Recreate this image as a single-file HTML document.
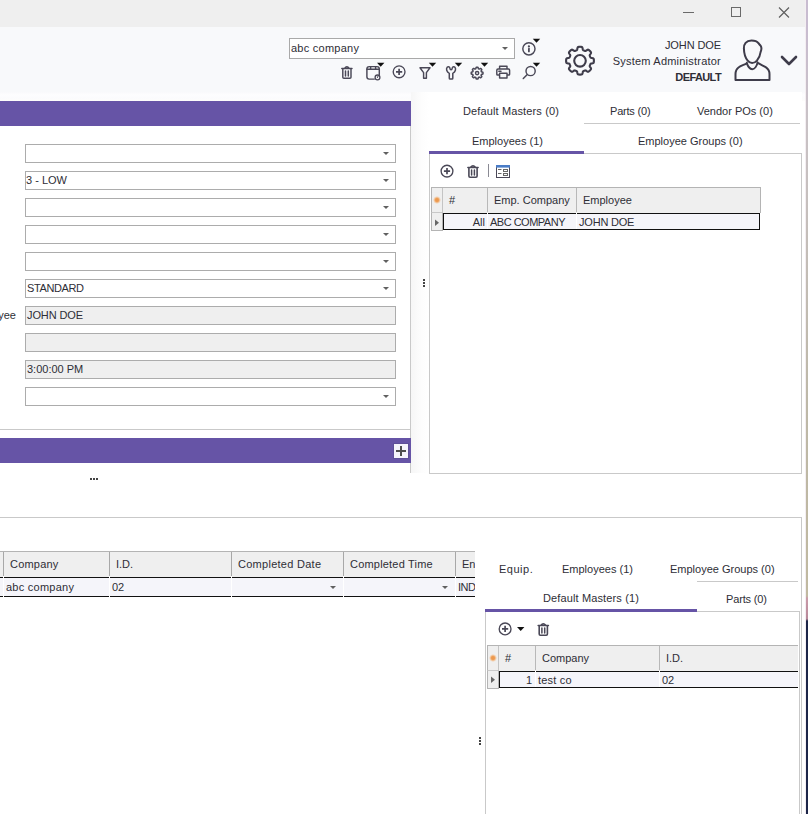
<!DOCTYPE html>
<html><head><meta charset="utf-8">
<style>
*{margin:0;padding:0;box-sizing:border-box}
html,body{width:808px;height:814px;overflow:hidden;background:#fff;font-family:"Liberation Sans",sans-serif;font-size:11px;color:#2e2e36}
.a{position:absolute}
.t{position:absolute;white-space:nowrap;line-height:13px}
.fld{position:absolute;left:25px;width:371px;height:19px;border:1px solid #acacac;background:#fff}
.fld.dis{background:#efefef}
.dd{position:absolute;width:0;height:0;border-left:3.5px solid transparent;border-right:3.5px solid transparent;border-top:3px solid #606060}
.tri{position:absolute;width:0;height:0;border-left:4px solid transparent;border-right:4px solid transparent;border-top:4px solid #111}
.hline{position:absolute;height:1px;background:#c9c9c9}
.vline{position:absolute;width:1px;background:#c9c9c9}
</style></head><body>
<!-- title bar -->
<div class="a" style="left:0;top:0;width:808px;height:27px;background:#efefef"></div>
<!-- header -->
<div class="a" style="left:0;top:27px;width:808px;height:65px;background:#f8f9fb"></div>
<div class="a" style="left:0;top:92px;width:808px;height:9px;background:linear-gradient(#f9f9fb,#fdfdfe 30%,#fbfbfd 70%,#fdfdfb)"></div>


<!-- title bar controls -->
<div class="a" style="left:683px;top:12px;width:11px;height:1px;background:#6a6a6a"></div>
<div class="a" style="left:731px;top:7px;width:10px;height:10px;border:1px solid #6a6a6a"></div>
<svg class="a" style="left:778px;top:7px" width="12" height="11" viewBox="0 0 12 11"><path d="M1 0.5L11 10.5M11 0.5L1 10.5" stroke="#5e5e5e" stroke-width="1.15"/></svg>

<!-- combo -->
<div class="a" style="left:289px;top:38px;width:226px;height:21px;border:1px solid #a9a9a9;background:#fff"></div>
<div class="t" style="left:291px;top:42px;letter-spacing:0.25px">abc company</div>
<div class="dd" style="left:502px;top:47px"></div>

<!-- header icons -->
<svg class="a" style="left:0;top:0;overflow:visible" width="808" height="100">
 <g fill="none" stroke="#4a4857" stroke-width="1.45" stroke-linejoin="round" stroke-linecap="round">
  <!-- trash -->
  <g transform="translate(-126.1 -98.9)"><path d="M467.9 167.5H478.1M470.6 167.3Q473 164.2 475.4 167.3"/><path d="M468.9 167.9V176.1Q468.9 177.2 470 177.2H476Q477.1 177.2 477.1 176.1V167.9"/><path d="M471.6 169.9V174.9M474.4 169.9V174.9" stroke-width="1.5"/></g>
  <!-- calendar -->
  <path d="M374.3 79.1H369.2Q366.9 79.1 366.9 76.8V68.9Q366.9 66.6 369.2 66.6H377Q379.3 66.6 379.3 68.9V74.6"/>
  <path d="M366.9 69.3H379.3M370.6 66.6V69.3M375.6 66.6V69.3"/>
  <circle cx="377.5" cy="77.4" r="2.4" stroke-width="1.3"/>
  <path d="M377.4 77.6L378.1 76" stroke-width="1"/>
  <!-- plus circle -->
  <circle cx="399.1" cy="71.8" r="5.9" stroke-width="1.35"/><path d="M396.0 71.8H402.2M399.1 68.7V74.9" stroke-width="1.7" stroke-linecap="butt"/>
  <!-- filter -->
  <path d="M420 67.8H430L426.4 72.6V78.2H423.6V72.6Z"/>
  <!-- wrench -->
  <path stroke-width="1.5" d="M449.6 67.4C449 66.6 447.8 66.6 447.2 67.3C446 68.8 446.4 71.8 449.3 73.3V78.2Q449.3 79 450.1 79H452Q452.8 79 452.8 78.2V73.3C455.7 71.8 456.1 68.8 454.9 67.3C454.3 66.6 453.1 66.6 452.5 67.4C452.3 68.6 451.8 69.8 451.05 69.8C450.3 69.8 449.8 68.6 449.6 67.4Z"/>
  <!-- printer -->
  <path d="M499.6 69V66.3H507V69M499.2 75H497.6Q496.8 75 496.8 74.2V70.2Q496.8 69 498 69H508.6Q509.6 69 509.6 70.2V74.2Q509.6 75 508.8 75H507.4M499.6 73.2H507V78H499.6Z"/>
  <path d="M498.8 71.2H501"/>
  <!-- search -->
  <circle cx="530.6" cy="71" r="4.6"/>
  <path d="M527.3 74.4L523.3 78.6"/>
  <!-- info -->
  <circle cx="528.9" cy="48.8" r="6.1"/>
  <path d="M528.9 48.6V51.4" stroke-width="1.8"/>
  <circle cx="528.9" cy="46.4" r="0.5" fill="#4a4857" stroke-width="1.2"/>
 </g>
 <!-- gear small -->
 <path fill="none" stroke="#4a4857" stroke-width="1.5" stroke-linejoin="round" d="M483.00 73.10L483.00 73.29L482.99 73.47L482.96 73.65L482.92 73.84L482.81 74.00L482.55 74.14L482.10 74.22L481.71 74.28L481.51 74.38L481.41 74.50L481.34 74.63L481.28 74.76L481.23 74.89L481.18 75.02L481.13 75.16L481.12 75.31L481.19 75.52L481.43 75.85L481.69 76.22L481.78 76.50L481.73 76.69L481.64 76.85L481.52 77.00L481.40 77.14L481.27 77.27L481.14 77.40L481.00 77.52L480.85 77.64L480.69 77.73L480.50 77.78L480.22 77.69L479.85 77.43L479.52 77.19L479.31 77.12L479.16 77.13L479.02 77.18L478.89 77.23L478.76 77.28L478.63 77.34L478.50 77.41L478.38 77.51L478.28 77.71L478.22 78.10L478.14 78.55L478.00 78.81L477.84 78.92L477.65 78.96L477.47 78.99L477.29 79.00L477.10 79.00L476.91 79.00L476.73 78.99L476.55 78.96L476.36 78.92L476.20 78.81L476.06 78.55L475.98 78.10L475.92 77.71L475.82 77.51L475.70 77.41L475.57 77.34L475.44 77.28L475.31 77.23L475.18 77.18L475.04 77.13L474.89 77.12L474.68 77.19L474.35 77.43L473.98 77.69L473.70 77.78L473.51 77.73L473.35 77.64L473.20 77.52L473.06 77.40L472.93 77.27L472.80 77.14L472.68 77.00L472.56 76.85L472.47 76.69L472.42 76.50L472.51 76.22L472.77 75.85L473.01 75.52L473.08 75.31L473.07 75.16L473.02 75.02L472.97 74.89L472.92 74.76L472.86 74.63L472.79 74.50L472.69 74.38L472.49 74.28L472.10 74.22L471.65 74.14L471.39 74.00L471.28 73.84L471.24 73.65L471.21 73.47L471.20 73.29L471.20 73.10L471.20 72.91L471.21 72.73L471.24 72.55L471.28 72.36L471.39 72.20L471.65 72.06L472.10 71.98L472.49 71.92L472.69 71.82L472.79 71.70L472.86 71.57L472.92 71.44L472.97 71.31L473.02 71.18L473.07 71.04L473.08 70.89L473.01 70.68L472.77 70.35L472.51 69.98L472.42 69.70L472.47 69.51L472.56 69.35L472.68 69.20L472.80 69.06L472.93 68.93L473.06 68.80L473.20 68.68L473.35 68.56L473.51 68.47L473.70 68.42L473.98 68.51L474.35 68.77L474.68 69.01L474.89 69.08L475.04 69.07L475.18 69.02L475.31 68.97L475.44 68.92L475.57 68.86L475.70 68.79L475.82 68.69L475.92 68.49L475.98 68.10L476.06 67.65L476.20 67.39L476.36 67.28L476.55 67.24L476.73 67.21L476.91 67.20L477.10 67.20L477.29 67.20L477.47 67.21L477.65 67.24L477.84 67.28L478.00 67.39L478.14 67.65L478.22 68.10L478.28 68.49L478.38 68.69L478.50 68.79L478.63 68.86L478.76 68.92L478.89 68.97L479.02 69.02L479.16 69.07L479.31 69.08L479.52 69.01L479.85 68.77L480.22 68.51L480.50 68.42L480.69 68.47L480.85 68.56L481.00 68.68L481.14 68.80L481.27 68.93L481.40 69.06L481.52 69.20L481.64 69.35L481.73 69.51L481.78 69.70L481.69 69.98L481.43 70.35L481.19 70.68L481.12 70.89L481.13 71.04L481.18 71.18L481.23 71.31L481.28 71.44L481.34 71.57L481.41 71.70L481.51 71.82L481.71 71.92L482.10 71.98L482.55 72.06L482.81 72.20L482.92 72.36L482.96 72.55L482.99 72.73L483.00 72.91Z"/>
 <circle cx="477.1" cy="73.1" r="1.6" fill="none" stroke="#4a4857" stroke-width="1.4"/>
 <!-- triangles -->
 <g fill="#111">
  <path d="M377 62.8H384.4L380.7 66.8Z"/>
  <path d="M428.8 62.8H436.2L432.5 66.8Z"/>
  <path d="M454.8 62.8H462.2L458.5 66.8Z"/>
  <path d="M480.8 62.8H488.2L484.5 66.8Z"/>
  <path d="M532.8 62.8H540.2L536.5 66.8Z"/>
  <path d="M532.8 38.8H540.2L536.5 42.8Z"/>
 </g>
</svg>

<!-- big gear -->
<svg class="a" style="left:0;top:0;overflow:visible" width="808" height="100">
 <path fill="none" stroke="#3e3c4a" stroke-width="2.1" stroke-linejoin="round" d="M593.90 60.70L593.90 60.97L593.89 61.25L593.87 61.52L593.84 61.79L593.81 62.06L593.75 62.33L593.65 62.59L593.48 62.84L593.18 63.05L592.70 63.23L592.07 63.35L591.46 63.45L591.01 63.57L590.73 63.73L590.55 63.90L590.42 64.09L590.32 64.28L590.24 64.48L590.15 64.67L590.07 64.87L589.99 65.07L589.91 65.27L589.83 65.47L589.77 65.68L589.72 65.90L589.73 66.15L589.82 66.46L590.05 66.86L590.41 67.36L590.77 67.90L590.99 68.36L591.04 68.72L590.99 69.02L590.87 69.27L590.72 69.50L590.56 69.72L590.39 69.93L590.21 70.13L590.02 70.33L589.83 70.53L589.63 70.72L589.43 70.91L589.23 71.09L589.02 71.26L588.80 71.42L588.57 71.57L588.32 71.69L588.02 71.74L587.66 71.69L587.20 71.47L586.66 71.11L586.16 70.75L585.76 70.52L585.45 70.43L585.20 70.42L584.98 70.47L584.77 70.53L584.57 70.61L584.37 70.69L584.17 70.77L583.97 70.85L583.78 70.94L583.58 71.02L583.39 71.12L583.20 71.25L583.03 71.43L582.87 71.71L582.75 72.16L582.65 72.77L582.53 73.40L582.35 73.88L582.14 74.18L581.89 74.35L581.63 74.45L581.36 74.51L581.09 74.54L580.82 74.57L580.55 74.59L580.27 74.60L580.00 74.60L579.73 74.60L579.45 74.59L579.18 74.57L578.91 74.54L578.64 74.51L578.37 74.45L578.11 74.35L577.86 74.18L577.65 73.88L577.47 73.40L577.35 72.77L577.25 72.16L577.13 71.71L576.97 71.43L576.80 71.25L576.61 71.12L576.42 71.02L576.22 70.94L576.03 70.85L575.83 70.77L575.63 70.69L575.43 70.61L575.23 70.53L575.02 70.47L574.80 70.42L574.55 70.43L574.24 70.52L573.84 70.75L573.34 71.11L572.80 71.47L572.34 71.69L571.98 71.74L571.68 71.69L571.43 71.57L571.20 71.42L570.98 71.26L570.77 71.09L570.57 70.91L570.37 70.72L570.17 70.53L569.98 70.33L569.79 70.13L569.61 69.93L569.44 69.72L569.28 69.50L569.13 69.27L569.01 69.02L568.96 68.72L569.01 68.36L569.23 67.90L569.59 67.36L569.95 66.86L570.18 66.46L570.27 66.15L570.28 65.90L570.23 65.68L570.17 65.47L570.09 65.27L570.01 65.07L569.93 64.87L569.85 64.67L569.76 64.48L569.68 64.28L569.58 64.09L569.45 63.90L569.27 63.73L568.99 63.57L568.54 63.45L567.93 63.35L567.30 63.23L566.82 63.05L566.52 62.84L566.35 62.59L566.25 62.33L566.19 62.06L566.16 61.79L566.13 61.52L566.11 61.25L566.10 60.97L566.10 60.70L566.10 60.43L566.11 60.15L566.13 59.88L566.16 59.61L566.19 59.34L566.25 59.07L566.35 58.81L566.52 58.56L566.82 58.35L567.30 58.17L567.93 58.05L568.54 57.95L568.99 57.83L569.27 57.67L569.45 57.50L569.58 57.31L569.68 57.12L569.76 56.92L569.85 56.73L569.93 56.53L570.01 56.33L570.09 56.13L570.17 55.93L570.23 55.72L570.28 55.50L570.27 55.25L570.18 54.94L569.95 54.54L569.59 54.04L569.23 53.50L569.01 53.04L568.96 52.68L569.01 52.38L569.13 52.13L569.28 51.90L569.44 51.68L569.61 51.47L569.79 51.27L569.98 51.07L570.17 50.87L570.37 50.68L570.57 50.49L570.77 50.31L570.98 50.14L571.20 49.98L571.43 49.83L571.68 49.71L571.98 49.66L572.34 49.71L572.80 49.93L573.34 50.29L573.84 50.65L574.24 50.88L574.55 50.97L574.80 50.98L575.02 50.93L575.23 50.87L575.43 50.79L575.63 50.71L575.83 50.63L576.03 50.55L576.22 50.46L576.42 50.38L576.61 50.28L576.80 50.15L576.97 49.97L577.13 49.69L577.25 49.24L577.35 48.63L577.47 48.00L577.65 47.52L577.86 47.22L578.11 47.05L578.37 46.95L578.64 46.89L578.91 46.86L579.18 46.83L579.45 46.81L579.73 46.80L580.00 46.80L580.27 46.80L580.55 46.81L580.82 46.83L581.09 46.86L581.36 46.89L581.63 46.95L581.89 47.05L582.14 47.22L582.35 47.52L582.53 48.00L582.65 48.63L582.75 49.24L582.87 49.69L583.03 49.97L583.20 50.15L583.39 50.28L583.58 50.38L583.78 50.46L583.97 50.55L584.17 50.63L584.37 50.71L584.57 50.79L584.77 50.87L584.98 50.93L585.20 50.98L585.45 50.97L585.76 50.88L586.16 50.65L586.66 50.29L587.20 49.93L587.66 49.71L588.02 49.66L588.32 49.71L588.57 49.83L588.80 49.98L589.02 50.14L589.23 50.31L589.43 50.49L589.63 50.68L589.83 50.87L590.02 51.07L590.21 51.27L590.39 51.47L590.56 51.68L590.72 51.90L590.87 52.13L590.99 52.38L591.04 52.68L590.99 53.04L590.77 53.50L590.41 54.04L590.05 54.54L589.82 54.94L589.73 55.25L589.72 55.50L589.77 55.72L589.83 55.93L589.91 56.13L589.99 56.33L590.07 56.53L590.15 56.73L590.24 56.92L590.32 57.12L590.42 57.31L590.55 57.50L590.73 57.67L591.01 57.83L591.46 57.95L592.07 58.05L592.70 58.17L593.18 58.35L593.48 58.56L593.65 58.81L593.75 59.07L593.81 59.34L593.84 59.61L593.87 59.88L593.89 60.15L593.90 60.43Z"/>
 <circle cx="580" cy="60.8" r="5.8" fill="none" stroke="#3e3c4a" stroke-width="2.1"/>
 <!-- avatar -->
 <path fill="none" stroke="#3e3c4a" stroke-width="2" stroke-linejoin="round" stroke-linecap="round"
   d="M751.5 40.6C746 40.6 743.8 44 743.9 48.5C744 53 745 57.5 747.7 60.6C749 62.2 750.5 63.1 752.1 63.1C754 63.1 755.6 62 756.9 60.6C759 58 760.3 55 760.6 52C761.5 50 761.6 47.5 760.8 46C760 44.8 759 44 758.4 43.2C757 41.3 754.5 40.6 751.5 40.6Z
   M746.8 62.8C747.5 66 750 69.3 752.2 69.3C754.5 69.3 756.8 66 757.6 62.5
   M746.8 63.3C744 64.8 741 65.5 738.8 67.2C736.3 69 735.5 71 735.5 74V79.9H769.5V74C769.5 71 768.5 69 766 67.3C764 66 761 65 758.2 63.2"/>
 <!-- chevron -->
 <path d="M782 57L789 64L796 57" fill="none" stroke="#3e3c4a" stroke-width="2.6" stroke-linecap="round" stroke-linejoin="round"/>
</svg>
<div class="t" style="right:87px;top:39px;text-align:right;letter-spacing:-0.1px">JOHN DOE</div>
<div class="t" style="right:87px;top:55px;text-align:right;letter-spacing:0.22px">System Administrator</div>
<div class="t" style="right:87px;top:71px;text-align:right;font-weight:bold;letter-spacing:-0.6px">DEFAULT</div>

<!-- left panel -->
<div class="a" style="left:0;top:101px;width:411px;height:25px;background:#6654a6"></div>

<!-- splitter -->
<div class="a" style="left:411px;top:92px;width:18px;height:381px;background:linear-gradient(90deg,#f6f6f6,#fdfdfd 60%,#fff)"></div>
<div class="vline" style="left:410px;top:126px;height:347px"></div>
<div class="hline" style="left:0;top:429px;width:410px"></div>

<div class="a" style="left:0;top:438px;width:411px;height:25px;background:#6654a6"></div>


<!-- form fields -->
<div class="fld" style="top:144px"></div>
<div class="dd" style="left:383px;top:152px"></div>
<div class="fld" style="top:171px"></div>
<div class="dd" style="left:383px;top:179px"></div>
<div class="t" style="left:26px;top:174px">3 - LOW</div>
<div class="fld" style="top:198px"></div>
<div class="dd" style="left:383px;top:206px"></div>
<div class="fld" style="top:225px"></div>
<div class="dd" style="left:383px;top:233px"></div>
<div class="fld" style="top:252px"></div>
<div class="dd" style="left:383px;top:260px"></div>
<div class="fld" style="top:279px"></div>
<div class="dd" style="left:383px;top:287px"></div>
<div class="t" style="left:27px;top:282px;letter-spacing:-0.4px">STANDARD</div>
<div class="fld dis" style="top:306px"></div>
<div class="t" style="left:27px;top:309px;letter-spacing:-0.1px">JOHN DOE</div>
<div class="fld dis" style="top:333px"></div>
<div class="fld dis" style="top:360px"></div>
<div class="t" style="left:27px;top:363px">3:00:00 PM</div>
<div class="fld" style="top:387px"></div>
<div class="dd" style="left:383px;top:395px"></div>
<div class="t" style="right:792px;top:309px">yee</div>
<div class="a" style="left:394px;top:444px;width:14px;height:14px;background:#f5f4fb;box-shadow:0 0 0 1px #5e4f98"></div>
<div class="a" style="left:396px;top:450px;width:10px;height:2px;background:#4e4e4e"></div>
<div class="a" style="left:400px;top:446px;width:2px;height:10px;background:#4e4e4e"></div>
<div class="a" style="left:90px;top:478px;width:2px;height:2px;background:#444"></div>
<div class="a" style="left:93px;top:478px;width:2px;height:2px;background:#444"></div>
<div class="a" style="left:96px;top:478px;width:2px;height:2px;background:#444"></div>
<div class="a" style="left:423px;top:279px;width:2px;height:2px;background:#444"></div>
<div class="a" style="left:423px;top:282px;width:2px;height:2px;background:#444"></div>
<div class="a" style="left:423px;top:285px;width:2px;height:2px;background:#444"></div>

<!-- right panel -->
<div class="a" style="left:429px;top:92px;width:373px;height:61px;background:#fff"></div>
<div class="a" style="left:429px;top:153px;width:373px;height:321px;border:1px solid #c9c9c9;background:#fff"></div>


<!-- right panel tabs -->
<div class="t" style="left:463px;top:105px;letter-spacing:0.13px">Default Masters (0)</div>
<div class="t" style="left:610px;top:105px;letter-spacing:-0.2px">Parts (0)</div>
<div class="t" style="left:697px;top:105px">Vendor POs (0)</div>
<div class="hline" style="left:584px;top:123px;width:216px"></div>
<div class="t" style="left:472px;top:135px">Employees (1)</div>
<div class="t" style="left:638px;top:135px">Employee Groups (0)</div>
<div class="a" style="left:429px;top:151px;width:155px;height:3px;background:#6654a6"></div>

<!-- toolbar -->
<svg class="a" style="left:0;top:0;overflow:visible" width="808" height="250">
 <g fill="none" stroke="#4a4857" stroke-width="1.6" stroke-linejoin="round" stroke-linecap="round">
  <circle cx="447" cy="171.1" r="5.9" stroke-width="1.35"/><path d="M443.9 171.1H450.1M447 168.0V174.2" stroke-width="1.7" stroke-linecap="butt"/>
  <g transform="translate(0 0)"><path d="M467.9 167.5H478.1M470.6 167.3Q473 164.2 475.4 167.3"/><path d="M468.9 167.9V176.1Q468.9 177.2 470 177.2H476Q477.1 177.2 477.1 176.1V167.9"/><path d="M471.6 169.9V174.9M474.4 169.9V174.9" stroke-width="1.5"/></g>
 </g>
 <path d="M488.5 164V177" stroke="#8a8a94" stroke-width="1"/>
  <rect x="496.5" y="165.5" width="13" height="12" fill="#fff" stroke="#4a4857" stroke-width="1"/>
 <rect x="496" y="165" width="14" height="2.6" fill="#4a7cc7"/>
 <rect x="498" y="169" width="3.5" height="1" fill="#666"/>
 <rect x="498" y="173" width="3.5" height="1" fill="#666"/>
 <rect x="503.5" y="169.5" width="4" height="2" fill="none" stroke="#666" stroke-width="1"/>
 <rect x="503.5" y="173.5" width="4" height="2" fill="none" stroke="#666" stroke-width="1"/>
</svg>

<!-- grid -->
<div class="a" style="left:431px;top:187px;width:330px;height:26px;background:#efefef;border:1px solid #b4b4b4;border-bottom:none"></div>
<div class="a" style="left:431px;top:212px;width:12px;height:19px;background:#efefef;border:1px solid #b4b4b4;border-top:1px solid #c8c8c8"></div>
<div class="vline" style="left:442px;top:188px;height:24px;background:#c4c4c4"></div>
<div class="vline" style="left:487px;top:188px;height:24px;background:#b8b8b8"></div>
<div class="vline" style="left:576px;top:188px;height:24px;background:#b8b8b8"></div>
<div class="a" style="left:443px;top:213px;width:317px;height:17px;border:1px solid #111;background:#f5f5fa"></div>
<div class="vline" style="left:487px;top:213px;height:16px;background:#fff"></div>
<div class="vline" style="left:576px;top:213px;height:16px;background:#fff"></div>
<div class="a" style="left:433px;top:196px;width:8px;height:8px;border-radius:50%;background:radial-gradient(circle,#ea9448 0,#ee9f58 1.8px,rgba(245,175,110,0.55) 2.8px,rgba(250,210,170,0) 4px)"></div>
<svg class="a" style="left:434px;top:219px" width="6" height="8"><path d="M1 0.5L5 3.8L1 7Z" fill="#666"/></svg>
<div class="t" style="left:449px;top:194px">#</div>
<div class="t" style="left:494px;top:194px">Emp. Company</div>
<div class="t" style="left:583px;top:194px">Employee</div>
<div class="t" style="right:323px;top:216px">All</div>
<div class="t" style="left:490px;top:216px;letter-spacing:-0.5px">ABC COMPANY</div>
<div class="t" style="left:579px;top:216px;letter-spacing:-0.2px">JOHN DOE</div>

<!-- bottom -->
<div class="hline" style="left:0;top:517px;width:802px"></div>
<div class="vline" style="left:801px;top:517px;height:297px"></div>

<!-- bottom left grid -->
<div class="a" style="left:0;top:551px;width:475px;height:26px;background:#efefef;border-top:1px solid #b4b4b4"></div>
<div class="a" style="left:0;top:577px;width:475px;height:19px;background:#f5f5fa"></div>
<div class="a" style="left:0;top:577px;width:475px;height:1px;background:#111"></div>
<div class="a" style="left:0;top:596px;width:475px;height:1px;background:#111"></div>
<div class="vline" style="left:3px;top:552px;height:24px;background:#a8a8a8"></div>
<div class="vline" style="left:109px;top:552px;height:24px;background:#a8a8a8"></div>
<div class="vline" style="left:231px;top:552px;height:24px;background:#a8a8a8"></div>
<div class="vline" style="left:343px;top:552px;height:24px;background:#a8a8a8"></div>
<div class="vline" style="left:455px;top:552px;height:24px;background:#a8a8a8"></div>
<div class="vline" style="left:3px;top:576px;height:21px;background:#fff"></div>
<div class="vline" style="left:109px;top:576px;height:21px;background:#fff"></div>
<div class="vline" style="left:231px;top:576px;height:21px;background:#fff"></div>
<div class="vline" style="left:343px;top:576px;height:21px;background:#fff"></div>
<div class="vline" style="left:455px;top:576px;height:21px;background:#fff"></div>
<div class="t" style="left:10px;top:558px;letter-spacing:0.2px">Company</div>
<div class="t" style="left:116px;top:558px">I.D.</div>
<div class="t" style="left:238px;top:558px;letter-spacing:0.27px">Completed Date</div>
<div class="t" style="left:350px;top:558px;letter-spacing:0.2px">Completed Time</div>
<div class="a" style="left:462px;top:551px;width:13px;height:26px;overflow:hidden"><div class="t" style="left:0;top:7px">Enabled</div></div>
<div class="t" style="left:6px;top:581px;letter-spacing:0.25px">abc company</div>
<div class="t" style="left:112px;top:581px">02</div>
<div class="a" style="left:456px;top:578px;width:19px;height:17px;overflow:hidden"><div class="t" style="left:2px;top:3px;letter-spacing:-0.5px">INDEX</div></div>
<div class="dd" style="left:330px;top:586px"></div>
<div class="dd" style="left:442px;top:586px"></div>

<!-- bottom right panel -->
<div class="t" style="left:499px;top:563px;letter-spacing:0.5px">Equip.</div>
<div class="t" style="left:562px;top:563px">Employees (1)</div>
<div class="t" style="left:670px;top:563px">Employee Groups (0)</div>
<div class="hline" style="left:697px;top:581px;width:101px"></div>
<div class="t" style="left:543px;top:592px;letter-spacing:0.13px">Default Masters (1)</div>
<div class="t" style="left:726px;top:593px;letter-spacing:-0.15px">Parts (0)</div>
<div class="a" style="left:485px;top:611px;width:315px;height:203px;border:1px solid #c9c9c9;border-bottom:none;background:#fff"></div>
<div class="a" style="left:485px;top:609px;width:212px;height:3px;background:#6654a6"></div>
<svg class="a" style="left:0;top:0;overflow:visible" width="808" height="700">
 <g fill="none" stroke="#4a4857" stroke-width="1.6" stroke-linejoin="round" stroke-linecap="round">
  <circle cx="505.1" cy="628.9" r="5.9" stroke-width="1.35"/><path d="M502.0 628.9H508.2M505.1 625.8V632.0" stroke-width="1.7" stroke-linecap="butt"/>
  <g transform="translate(70.3 458)"><path d="M467.9 167.5H478.1M470.6 167.3Q473 164.2 475.4 167.3"/><path d="M468.9 167.9V176.1Q468.9 177.2 470 177.2H476Q477.1 177.2 477.1 176.1V167.9"/><path d="M471.6 169.9V174.9M474.4 169.9V174.9" stroke-width="1.5"/></g>
 </g>
 <path d="M517 627H524.4L520.7 631Z" fill="#111"/>
</svg>
<div class="a" style="left:487px;top:645px;width:311px;height:26px;background:#efefef;border-top:1px solid #b4b4b4;border-left:1px solid #b4b4b4"></div>
<div class="a" style="left:487px;top:670px;width:12px;height:19px;background:#efefef;border:1px solid #b4b4b4;border-top:1px solid #c8c8c8"></div>
<div class="vline" style="left:498px;top:646px;height:24px;background:#c4c4c4"></div>
<div class="vline" style="left:535px;top:646px;height:24px;background:#b8b8b8"></div>
<div class="vline" style="left:659px;top:646px;height:24px;background:#b8b8b8"></div>
<div class="a" style="left:499px;top:671px;width:299px;height:17px;border:1px solid #111;border-right:none;background:#f5f5fa"></div>
<div class="vline" style="left:535px;top:671px;height:16px;background:#fff"></div>
<div class="vline" style="left:659px;top:671px;height:16px;background:#fff"></div>
<div class="a" style="left:489px;top:654px;width:8px;height:8px;border-radius:50%;background:radial-gradient(circle,#ea9448 0,#ee9f58 1.8px,rgba(245,175,110,0.55) 2.8px,rgba(250,210,170,0) 4px)"></div>
<svg class="a" style="left:490px;top:676px" width="6" height="8"><path d="M1 0.5L5 3.8L1 7Z" fill="#666"/></svg>
<div class="t" style="left:505px;top:652px">#</div>
<div class="t" style="left:542px;top:652px">Company</div>
<div class="t" style="left:666px;top:652px">I.D.</div>
<div class="t" style="right:276px;top:674px">1</div>
<div class="t" style="left:538px;top:674px;letter-spacing:0.2px">test co</div>
<div class="t" style="left:662px;top:674px">02</div>
<div class="a" style="left:479px;top:737px;width:2px;height:2px;background:#444"></div>
<div class="a" style="left:479px;top:740px;width:2px;height:2px;background:#444"></div>
<div class="a" style="left:479px;top:743px;width:2px;height:2px;background:#444"></div>

<!-- window right edge -->
<div class="a" style="left:806px;top:0;width:2px;height:814px;background:linear-gradient(#c8bcd0 0,#c8bcd0 26px,#c9c2c6 120px,#bdb8a8 400px,#c0b9a0 596px,#c99aa8 598px,#b8899a 619px,#1c2548 621px,#1c2548 814px)"></div>
<div class="a" style="left:805px;top:0;width:1px;height:814px;background:#f4eef2"></div>

</body></html>
